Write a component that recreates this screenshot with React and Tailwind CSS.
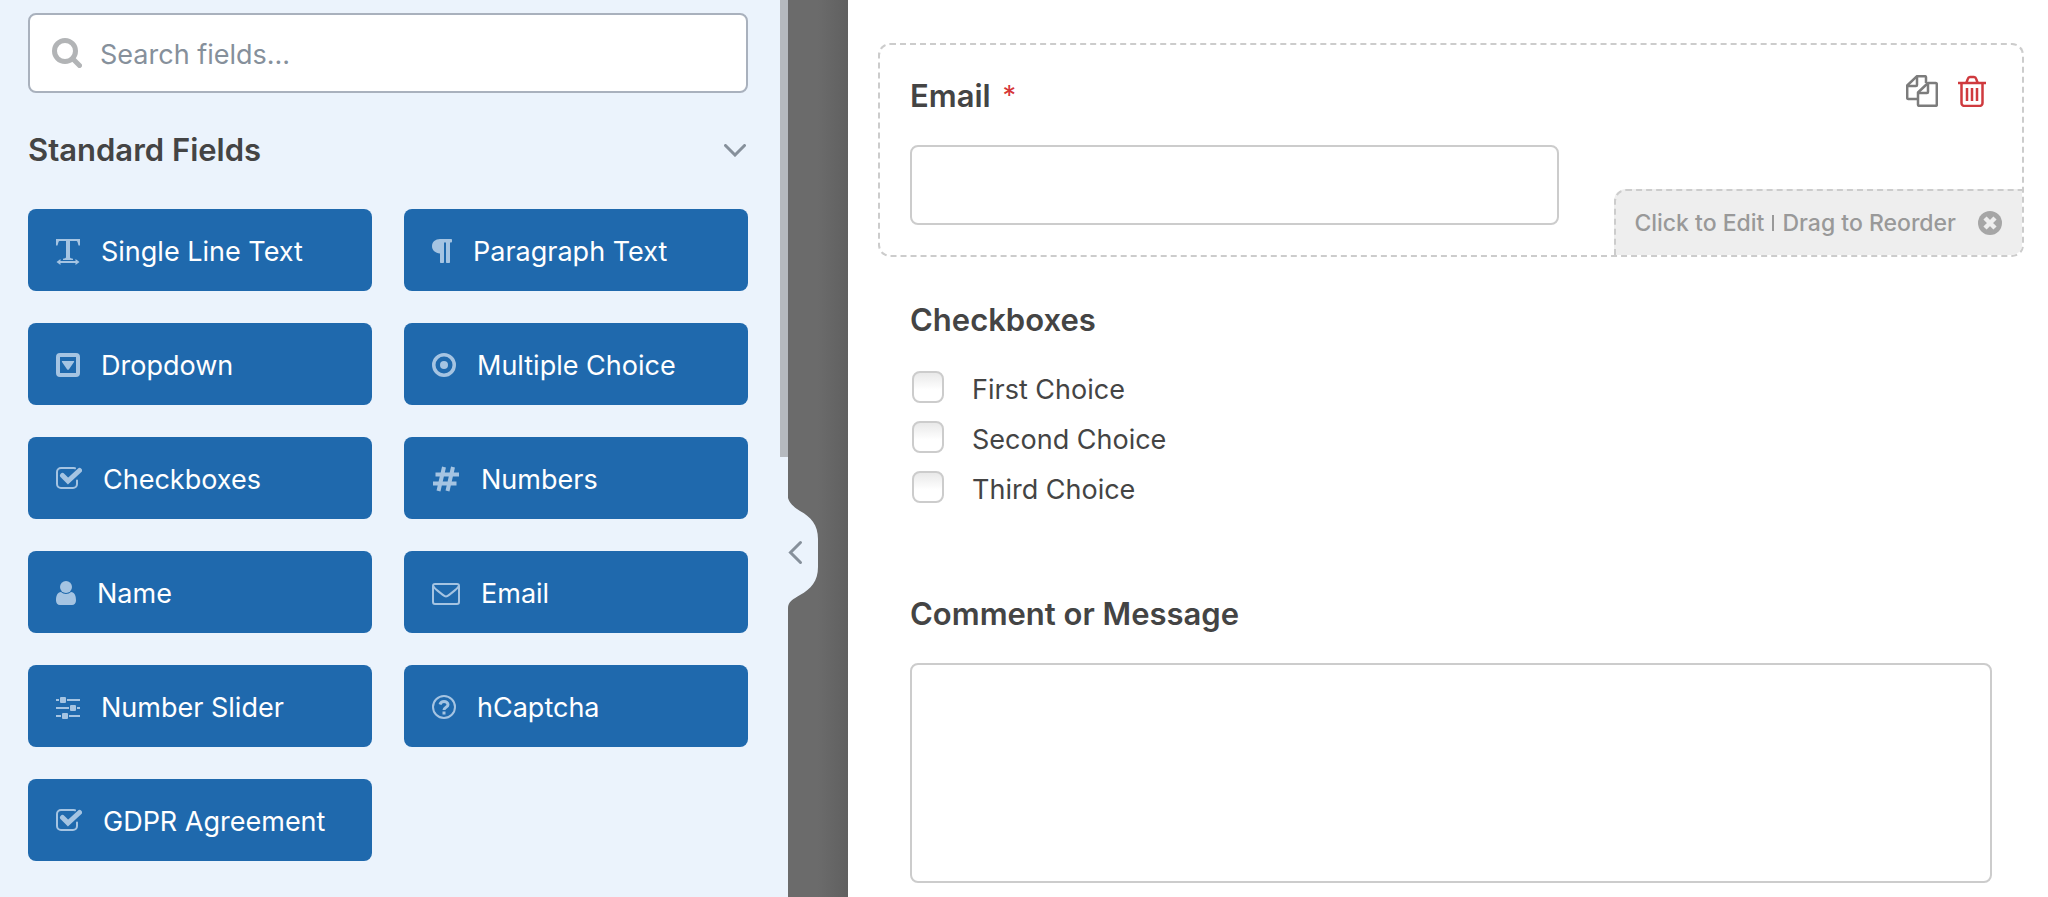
import React, { useState } from 'react';

// Field icons share a 30px tall box, the width differs per glyph
const icons = {
  text: (
    <svg className="h-[30px] w-6 shrink-0" viewBox="0 0 24 30" fill="currentColor" aria-hidden="true">
      <path d="M0 4h24v6.500h-1.500l-1-3.500c-.3-.8-.6-1-1.500-1h-6v16c0 .8.300 1 1 1.200l2 .5v1.300H7v-1.300l2-.5c.7-.2 1-.4 1-1.200V6H4c-.9 0-1.200.2-1.500 1l-1 3.500H0z" />
      <path d="M0.500 27l4-3v2h15v-2l4 3-4 3v-2h-15v2z" />
    </svg>
  ),
  paragraph: (
    <svg className="h-[30px] w-5 shrink-0" viewBox="0 0 20 30" fill="currentColor" aria-hidden="true">
      <path d="M8 4h11.200c.5 0 .8.300.8.800v1.700c0 .7-.3 1-.8 1H18V27c0 .6-.4 1-1 1h-2c-.6 0-1-.4-1-1V7.500h-2V27c0 .6-.4 1-1 1H9c-.6 0-1-.4-1-1v-8.500C3.400 18.200 0 15.300 0 11.300 0 7 3.400 4 8 4z" />
    </svg>
  ),
  dropdown: (
    <svg className="h-[30px] w-6 shrink-0" viewBox="0 0 24 30" aria-hidden="true">
      <rect x="2" y="6" width="20" height="20" rx="2" fill="none" stroke="currentColor" strokeWidth="4" />
      <path d="M6.500 12h11c.6 0 .8.500.5 1l-5 7.200c-.5.700-1.500.700-2 0L6 13c-.3-.5-.1-1 .5-1z" fill="currentColor" />
    </svg>
  ),
  radio: (
    <svg className="h-[30px] w-6 shrink-0" viewBox="0 0 24 30" aria-hidden="true">
      <circle cx="12" cy="16" r="10.250" fill="none" stroke="currentColor" strokeWidth="3.500" />
      <circle cx="12" cy="16" r="4" fill="currentColor" />
    </svg>
  ),
  check: (
    <svg className="h-[30px] w-[26px] shrink-0" viewBox="0 0 26 30" fill="none" stroke="currentColor" aria-hidden="true">
      <path d="M19 5.300A5 5 0 0 0 17.500 5H5a4 4 0 0 0-4 4v12a4 4 0 0 0 4 4h12a4 4 0 0 0 4-4v-3.500" strokeWidth="2" strokeLinecap="round" />
      <path d="M6.500 12.500l5.500 5.500L23.500 7.500" strokeWidth="5" strokeLinecap="round" />
    </svg>
  ),
  hash: (
    <svg className="h-[30px] w-7 shrink-0" viewBox="0 0 28 30" fill="none" stroke="currentColor" strokeWidth="4" aria-hidden="true">
      <path d="M12 4L6.500 28M21 4l-5.500 24M3.500 11.500H27M1 20.500h23.500" />
    </svg>
  ),
  user: (
    <svg className="h-[30px] w-5 shrink-0" viewBox="0 0 20 30" fill="currentColor" aria-hidden="true">
      <circle cx="10" cy="10" r="6" />
      <path d="M5 15c1.400 1.300 3.100 2 5 2s3.600-.7 5-2c3.500.3 5 3.500 5 8.500 0 2.700-1.600 4.500-4 4.500H4c-2.400 0-4-1.800-4-4.500C0 18.500 1.500 15.300 5 15z" />
    </svg>
  ),
  envelope: (
    <svg className="h-[30px] w-7 shrink-0" viewBox="0 0 28 30" fill="none" stroke="currentColor" strokeWidth="2" aria-hidden="true">
      <rect x="1" y="7" width="26" height="20" rx="2" />
      <path d="M1.500 9.500c1 1.600 2.300 2.800 4 4.100l5 4c1.500 1.200 2.500 1.900 3.500 1.900s2-.7 3.500-1.900l5-4c1.700-1.300 3-2.500 4-4.100" />
    </svg>
  ),
  sliders: (
    <svg className="h-[30px] w-6 shrink-0" viewBox="0 0 24 30" fill="currentColor" aria-hidden="true">
      <path d="M0 8h3v2H0zM11 8h13v2H11zM0 16h13v2H0zM21 16h3v2h-3zM0 24h5v2H0zM13 24h11v2H13z" />
      <rect x="4" y="6" width="6" height="6" rx="1" />
      <rect x="14" y="14" width="6" height="6" rx="1" />
      <rect x="6" y="22" width="6" height="6" rx="1" />
    </svg>
  ),
  question: (
    <svg className="h-[30px] w-6 shrink-0" viewBox="0 0 24 30" fill="none" stroke="currentColor" aria-hidden="true">
      <circle cx="12" cy="16" r="11" strokeWidth="2" />
      <path d="M8 13.500c.6-2 2-3 4-3 2.300 0 4 1.300 4 3.200 0 2.600-4 2.500-4 5.300" strokeWidth="3" />
      <path d="M10.500 22h3" strokeWidth="3" />
    </svg>
  ),
};

const fields = [
  { label: 'Single Line Text', icon: 'text' },
  { label: 'Paragraph Text', icon: 'paragraph' },
  { label: 'Dropdown', icon: 'dropdown' },
  { label: 'Multiple Choice', icon: 'radio' },
  { label: 'Checkboxes', icon: 'check' },
  { label: 'Numbers', icon: 'hash' },
  { label: 'Name', icon: 'user' },
  { label: 'Email', icon: 'envelope' },
  { label: 'Number Slider', icon: 'sliders' },
  { label: 'hCaptcha', icon: 'question' },
  { label: 'GDPR Agreement', icon: 'check' },
];

const choices = ['First Choice', 'Second Choice', 'Third Choice'];

function Sidebar() {
  const [search, setSearch] = useState('');
  const [open, setOpen] = useState(true);

  const visible = fields.filter(field => field.label.toLowerCase().includes(search.toLowerCase()));

  return (
    <aside className="relative w-[788px] shrink-0 bg-[#ebf3fc] pt-[13px] pr-10 pb-8 pl-7">
      <label className="flex h-20 items-center gap-[18px] rounded-lg border-2 border-[#a9b1bd] bg-white px-[22px]">
        <svg className="size-[30px] shrink-0" viewBox="0 0 30 30" fill="none" stroke="#b2b4b6" aria-hidden="true">
          <circle cx="13" cy="13" r="10.500" strokeWidth="5" />
          <path d="M20.500 20.500l7 7" strokeWidth="5" strokeLinecap="round" />
        </svg>
        <input
          type="text"
          aria-label="Search fields"
          placeholder="Search fields..."
          value={search}
          onChange={(e) => setSearch(e.target.value)}
          className="w-full bg-transparent pt-1 text-[27px] leading-10 outline-none placeholder:text-[#86909b]"
        />
      </label>

      <button
        onClick={() => setOpen(!open)}
        aria-expanded={open}
        className="mt-9 flex h-[42px] w-full items-center justify-between pr-0.5 text-[31px] leading-10 font-semibold"
      >
        Standard Fields
        <svg className="h-[13px] w-[22px]" viewBox="0 0 22 13" fill="none" stroke="#86909b" strokeWidth="3" strokeLinecap="round" aria-hidden="true">
          <path d="M1.500 1.500l9.500 9.500 9.500-9.500" />
        </svg>
      </button>

      {open && (
        <div className="mt-[38px] grid grid-cols-2 gap-8">
          {visible.map(field => (
            <button
              key={field.label}
              className="flex h-[82px] items-center gap-[21px] rounded-lg bg-[#1f69ad] px-7 text-[27px] leading-10 text-white hover:bg-[#195589]"
            >
              <span className="text-[#a5c4e2]">{icons[field.icon]}</span>
              <span className="pt-1">{field.label}</span>
            </button>
          ))}
        </div>
      )}

      {/* scrollbar thumb */}
      <div className="absolute top-0 right-0 h-[457px] w-2 bg-[#b5b9be]" />
    </aside>
  );
}

function EmailField() {
  const [showHelp, setShowHelp] = useState(true);

  return (
    <section className="relative rounded-xl border-2 border-dashed border-[#ccc] p-[30px]">
      <div className="flex items-start justify-between">
        <label htmlFor="email" className="text-[31px] leading-[42px] font-semibold">
          Email <span className="ml-1 align-top text-[27px] font-normal text-[#d63638]">*</span>
        </label>
        <div className="mr-1.5 flex gap-5">
          <button aria-label="Duplicate field">
            <svg className="h-8 w-8" viewBox="0 0 32 32" fill="none" stroke="#7c7c7c" strokeWidth="2.500" strokeLinejoin="round" aria-hidden="true">
              <path d="M20 8V2.200a1 1 0 0 0-1-1h-8L1.200 10.500V23a1 1 0 0 0 1 1H12" />
              <path d="M11 1.200V10a1 1 0 0 1-1 1H1.200" />
              <path d="M22 8h7.800a1 1 0 0 1 1 1v20.800a1 1 0 0 1-1 1H13a1 1 0 0 1-1-1V17.500z" />
              <path d="M22 8v9a1 1 0 0 1-1 1h-9" />
            </svg>
          </button>
          <button aria-label="Delete field">
            <svg className="h-8 w-7" viewBox="0 0 28 32" fill="none" stroke="#cf3a3e" aria-hidden="true">
              <path d="M0 8h28" strokeWidth="2.500" />
              <path d="M8.500 7.500l1.300-3.600C10.200 2.700 10.900 2 12 2h4c1.100 0 1.800.700 2.200 1.900l1.300 3.600" strokeWidth="2.500" />
              <path d="M3.500 8v20a3 3 0 0 0 3 3h15a3 3 0 0 0 3-3V8" strokeWidth="2.500" />
              <path d="M9 13v13M14 13v13M19 13v13" strokeWidth="2.500" />
            </svg>
          </button>
        </div>
      </div>
      <input id="email" type="email" className="mt-7 block h-20 w-3/5 rounded-lg border-2 border-[#ccc] bg-white px-5 text-[27px]" />

      {showHelp && (
        <div className="absolute right-0 bottom-0 flex h-[66px] items-center rounded-tl-xl rounded-br-[10px] border-t-2 border-l-2 border-dashed border-[#ccc] bg-[#eee] pr-5 pl-[18px] text-[23px] leading-8 font-medium text-[#999]">
          <span>Click to Edit</span>
          <span className="mx-2 h-4 w-0.5 bg-[#999]" />
          <span>Drag to Reorder</span>
          <button aria-label="Dismiss" onClick={() => setShowHelp(false)} className="ml-[22px]">
            <svg className="size-6" viewBox="0 0 24 24" aria-hidden="true">
              <circle cx="12" cy="12" r="12" fill="#a6a6a6" />
              <path d="M7 7l10 10M17 7l-10 10" stroke="#eee" strokeWidth="4.500" />
            </svg>
          </button>
        </div>
      )}
    </section>
  );
}

function App() {
  return (
    <div className="flex min-h-screen bg-white font-[Inter,sans-serif] text-[#444]">
      <Sidebar />

      <div className="relative w-[60px] shrink-0 bg-linear-to-r from-[#6b6b6b] from-50% to-[#606060]">
        <button aria-label="Collapse sidebar" className="absolute top-[498px] left-0">
          <svg className="h-[110px] w-[30px]" viewBox="0 0 30 110" aria-hidden="true">
            <path d="M0 0c2 6 6 9 12 13 11 6 18 14 18 28v28c0 14-7 22-18 28-7 4-12 7-12 13z" fill="#ebf3fc" />
            <path d="M12.500 44.500L2.500 54.500l10 10" fill="none" stroke="#86909b" strokeWidth="3" strokeLinecap="round" />
          </svg>
        </button>
      </div>

      <main className="flex min-w-0 flex-1 flex-col gap-[11px] pt-[43px] pr-6 pl-[30px]">
        <EmailField />

        <fieldset className="border-2 border-transparent p-[30px]">
          <legend className="float-left text-[31px] leading-10 font-semibold">Checkboxes</legend>
          <div className="clear-both mb-2.5 flex flex-col items-start gap-2.5 pt-7">
            {choices.map(choice => (
              <label key={choice} className="flex h-10 items-center gap-7 pl-0.5 text-[27px] leading-10">
                <input
                  type="checkbox"
                  className="mb-0.5 size-8 appearance-none rounded-lg border-2 border-[#ccc] bg-linear-to-b from-[#e9e9e9] to-white to-60% checked:bg-[#1f69ad]"
                />
                <span className="pt-1">{choice}</span>
              </label>
            ))}
          </div>
        </fieldset>

        <section className="border-2 border-transparent px-[30px] pt-[30px] pb-2.5">
          <label htmlFor="comment" className="block text-[31px] leading-[42px] font-semibold">Comment or Message</label>
          <textarea id="comment" className="mt-7 block h-[220px] w-full resize-none rounded-lg border-2 border-[#ccc] bg-white p-5 text-[27px]" />
        </section>
      </main>
    </div>
  );
}

export default App;
